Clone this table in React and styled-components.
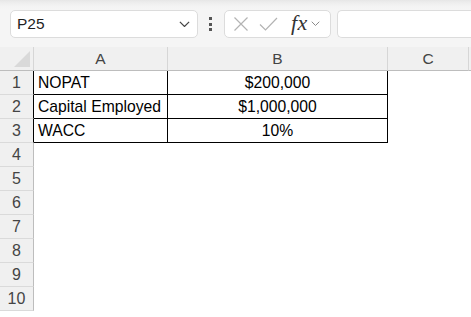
import React from "react";
import styled, { createGlobalStyle } from "styled-components";

const GlobalStyle = createGlobalStyle`
  html, body {
    margin: 0;
    padding: 0;
    background: #ffffff;
    font-family: "Liberation Sans", Arial, sans-serif;
  }
  * { box-sizing: border-box; }
`;

const Page = styled.div`
  width: 471px;
  height: 317px;
  overflow: hidden;
  background: #ffffff;
`;

const Toolbar = styled.div`
  height: 47px;
  padding: 10px 0 0 10px;
  display: flex;
  align-items: flex-start;
  background: linear-gradient(#e6e6e6 0px, #ececec 2px, #f3f3f3 6px, #f5f5f5 10px);
`;

const Field = styled.div`
  height: 28px;
  width: ${(props) => props.width || "auto"};
  flex: ${(props) => (props.grow ? "1" : "none")};
  margin-right: ${(props) => props.gap || "0px"};
  background: #ffffff;
  border: 1px solid #dcdcdc;
  border-right: ${(props) => (props.open ? "none" : "1px solid #dcdcdc")};
  border-radius: ${(props) => (props.open ? "5px 0 0 5px" : "5px")};
  display: flex;
  align-items: center;
  padding: ${(props) => props.padding || "0px"};
`;

const NameText = styled.span`
  flex: 1;
  font-size: 15.5px;
  color: #1f1f1f;
  padding-left: 6px;
`;

const Dots = styled.div`
  width: 26px;
  height: 28px;
  display: flex;
  flex-direction: column;
  align-items: center;
  justify-content: center;
  gap: 2.5px;
  padding-right: 2px;

  span {
    width: 3px;
    height: 3px;
    background: #555555;
  }
`;

const Spacer = styled.span`
  width: ${(props) => props.width};
  flex: none;
`;

const FxLabel = styled.span`
  font-family: "Liberation Serif", "Times New Roman", serif;
  font-style: italic;
  font-size: 22px;
  line-height: 1;
  color: #333333;
  margin: 0 3px 2px 0;
  letter-spacing: 0.5px;
`;

const Sheet = styled.div`
  display: grid;
  grid-template-columns: 34px 134px 220px 81px 1fr;
  grid-auto-rows: 24px;
`;

const Corner = styled.div`
  background: #f0f0f0;
  border-right: 1px solid #d6d6d6;
  border-bottom: 1px solid #bdbdbd;
  position: relative;

  &::after {
    content: "";
    position: absolute;
    right: 3px;
    bottom: 3px;
    width: 16px;
    height: 16px;
    background: #d9d9d9;
    clip-path: polygon(100% 0, 100% 100%, 0 100%);
  }
`;

const ColHead = styled.div`
  background: #f0f0f0;
  border-right: ${(props) => (props.last ? "none" : "1px solid #d6d6d6")};
  border-bottom: 1px solid #bdbdbd;
  display: flex;
  align-items: center;
  justify-content: center;
  font-size: 15.5px;
  color: #444444;
  padding-top: 1px;
`;

const RowHead = styled.div`
  background: #f0f0f0;
  border-right: 1px solid ${(props) => (props.boxed ? "#000000" : "#bdbdbd")};
  border-bottom: 1px solid #dadada;
  display: flex;
  align-items: center;
  justify-content: center;
  font-size: 16px;
  color: #444444;
`;

const Cell = styled.div`
  border-right: ${(props) => (props.boxed ? "1px solid #000000" : "none")};
  border-bottom: ${(props) => (props.boxed ? "1px solid #000000" : "none")};
  display: flex;
  align-items: center;
  justify-content: ${(props) => (props.center ? "center" : "flex-start")};
  padding: 0 4px;
  font-size: 15.7px;
  color: #000000;
  white-space: nowrap;
`;

const Chevron = ({ size = 10, color = "#444444" }) => (
  <svg width={size} height={size * 0.6} viewBox="0 0 10 6">
    <path d="M0.8 0.8 L5 5 L9.2 0.8" fill="none" stroke={color} strokeWidth="1.1" />
  </svg>
);

const CancelIcon = () => (
  <svg width="16" height="16" viewBox="0 0 16 16">
    <path d="M1.5 1.5 L14.5 14.5 M14.5 1.5 L1.5 14.5" stroke="#b3b3b3" strokeWidth="1.2" fill="none" />
  </svg>
);

const EnterIcon = () => (
  <svg width="19" height="14" viewBox="0 0 19 14">
    <path d="M1 7.5 L6.5 13 L18 1" stroke="#b3b3b3" strokeWidth="1.2" fill="none" />
  </svg>
);

const rows = [
  ["NOPAT", "$200,000"],
  ["Capital Employed", "$1,000,000"],
  ["WACC", "10%"],
];

const App = () => {
  return (
    <Page>
      <GlobalStyle />
      <Toolbar>
        <Field width="188px" padding="0 7px 0 0">
          <NameText>P25</NameText>
          <Chevron size={11} />
        </Field>
        <Dots>
          <span />
          <span />
          <span />
        </Dots>
        <Field width="107px" gap="6px" padding="0 0 0 8px">
          <CancelIcon />
          <Spacer width="10px" />
          <EnterIcon />
          <Spacer width="13px" />
          <FxLabel>fx</FxLabel>
          <Chevron size={9} color="#8a8a8a" />
        </Field>
        <Field grow open />
      </Toolbar>

      <Sheet>
        <Corner />
        <ColHead>A</ColHead>
        <ColHead>B</ColHead>
        <ColHead>C</ColHead>
        <ColHead last />

        {Array.from({ length: 10 }, (_, i) => {
          const data = rows[i];
          return (
            <React.Fragment key={i}>
              <RowHead boxed={!!data}>{i + 1}</RowHead>
              <Cell boxed={!!data}>{data ? data[0] : ""}</Cell>
              <Cell boxed={!!data} center>
                {data ? data[1] : ""}
              </Cell>
              <Cell />
              <Cell />
            </React.Fragment>
          );
        })}
      </Sheet>
    </Page>
  );
};

export default App;
